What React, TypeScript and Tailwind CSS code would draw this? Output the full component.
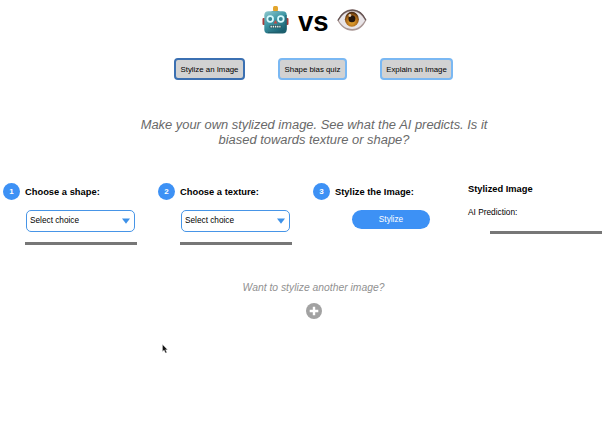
import React from "react";

function Robot() {
  return (
    <svg width="27" height="29" viewBox="0 0 27 29" aria-label="Robot">
      <defs>
        <linearGradient id="face" x1="0" y1="0" x2="0.6" y2="1">
          <stop offset="0" stopColor="#8fc9cf" />
          <stop offset="0.5" stopColor="#3f97a5" />
          <stop offset="1" stopColor="#195f70" />
        </linearGradient>
      </defs>
      <path d="M8 6.5 Q13.5 2.5 19 6.5Z" fill="#397e8c" />
      <rect x="11" y="0" width="5" height="5.3" rx="1.5" fill="#e3a52c" />
      <rect x="0.5" y="12" width="3" height="7" rx="1" fill="#a83b39" />
      <rect x="23.5" y="12" width="3" height="7" rx="1" fill="#a83b39" />
      <rect x="2.3" y="5.3" width="22.4" height="22.2" rx="4" fill="url(#face)" />
      <path d="M24 9v14q0 3.5-4 3.5H6" fill="none" stroke="#215f6c" strokeWidth="1" />
      <circle cx="8.2" cy="13" r="3.7" fill="#d8fbff" />
      <circle cx="18.8" cy="13" r="3.7" fill="#d8fbff" />
      <circle cx="8.2" cy="13" r="2" fill="#398796" />
      <circle cx="18.8" cy="13" r="2" fill="#398796" />
      <path d="m13.5 14 2 3.5h-4z" fill="#c14c45" />
      <rect x="7.5" y="19" width="12" height="3.3" rx="1" fill="#275761" />
      <path d="M8.5 20.6h10" stroke="#e5f3ed" strokeWidth="1.7" strokeDasharray="1.4 .8" />
    </svg>
  );
}

function Eye() {
  return (
    <svg width="30" height="24" viewBox="0 0 30 24" aria-label="Eye">
      <defs>
        <radialGradient id="iris" cx="0.5" cy="0.65" r="0.6">
          <stop offset="0.3" stopColor="#d7962b" />
          <stop offset="0.7" stopColor="#a86416" />
          <stop offset="1" stopColor="#4b2a10" />
        </radialGradient>
      </defs>
      <path d="M.5 12.5C4 5 9 1 15.500 1.300c7 .2 11 4.700 13.800 11-3 6.500-8 10.500-14 10.500C8.500 22.800 3.500 18 .5 12.500Z" fill="#a99694" />
      <path d="M1.800 12.600C6 5.500 10 3.500 15.500 3.500c6 0 9.500 3.500 12.500 8.800-4 6.200-7.500 8.700-12.700 8.700-6 0-10.500-3-13.500-8.400Z" fill="#e9e5e8" />
      <path d="M.8 12.500C4.500 5.500 9.500 2.200 15.500 2.200c6.500 0 10.500 4 13.500 10" fill="none" stroke="#625150" strokeWidth="1.2" />
      <ellipse cx="14.900" cy="11.300" rx="7" ry="7.500" fill="url(#iris)" />
      <circle cx="14.900" cy="10.800" r="3.500" fill="#24150d" />
      <circle cx="12.900" cy="7.500" r="1.400" fill="#e1cfb9" />
    </svg>
  );
}

function StepTitle({ number, children }: { number: number; children: React.ReactNode }) {
  return (
    <div className="flex h-[18px] items-center gap-[5px]">
      <span className="flex size-[17px] items-center justify-center rounded-full bg-[#3d91f5] pt-px text-[8px] font-bold text-white">{number}</span>
      <h2 className="pt-[2px] text-[9.35px] font-bold whitespace-nowrap">{children}</h2>
    </div>
  );
}

function Choice({ number, title }: { number: number; title: string }) {
  return (
    <section className="w-[155px]">
      <StepTitle number={number}>{title}</StepTitle>
      <button className="mt-[10px] ml-[23px] flex h-[22px] w-[109px] items-center justify-between rounded-[5px] border-[1.5px] border-[#4795e7] pr-1 pl-[3px] text-[8.25px]">
        <span className="pt-px">Select choice</span>
        <svg width="8" height="6" viewBox="0 0 8 6"><path d="M0 .5h8L4 5.700z" fill="#3d91e8" /></svg>
      </button>
      <div className="mt-[10px] ml-[22px] h-[3px] w-[112px] bg-[#777]" />
    </section>
  );
}

function NavButton({ children, active = false, width }: { children: React.ReactNode; active?: boolean; width: string }) {
  return (
    <button className={`h-[22px] rounded-[4px] border-2 bg-[#d2d2d2] pt-px text-[7.85px] whitespace-nowrap ${width} ${active ? "border-[#3b70b2]" : "border-[#7ab8f3]"}`}>
      {children}
    </button>
  );
}

export default function App() {
  return (
    <main className="relative h-[434px] w-[616px] overflow-hidden bg-white font-['Liberation_Sans',Arial,sans-serif] text-black">
      <header className="flex h-[40px] items-center pl-[262px]">
        <Robot />
        <h1 className="ml-[9px] w-[30px] pt-[3px] text-[27.5px] leading-[30px] font-bold">vs</h1>
        <div className="ml-[9px]"><Eye /></div>
      </header>
      <nav className="mt-[18px] ml-[174px] flex gap-[33px]">
        <NavButton active width="w-[71px]">Stylize an Image</NavButton>
        <NavButton width="w-[69px]">Shape bias quiz</NavButton>
        <NavButton width="w-[73px]">Explain an Image</NavButton>
      </nav>
      <p className="mt-[37px] ml-[134px] w-[360px] text-center text-[12.92px] leading-[15px] text-[#696969] italic">
        Make your own stylized image. See what the AI predicts. Is it<br />biased towards texture or shape?
      </p>
      <div className="mt-[35px] ml-[3px] flex h-[64px]">
        <Choice number={1} title="Choose a shape:" />
        <Choice number={2} title="Choose a texture:" />
        <section className="w-[155px]">
          <StepTitle number={3}>Stylize the Image:</StepTitle>
          <button className="mt-[10px] ml-[39px] h-[19px] w-[78px] rounded-full bg-[#3d91f5] pt-[2px] text-[8.25px] text-white">Stylize</button>
        </section>
        <section className="w-[134px]">
          <h2 className="mt-[1px] text-[9.3px] leading-[12px] font-bold">Stylized Image</h2>
          <p className="mt-[12px] text-[8.3px] leading-[10px]">AI Prediction:</p>
          <div className="mt-[14px] ml-[22px] h-[3px] w-[112px] bg-[#777]" />
        </section>
      </div>
      <footer className="mt-[36px] ml-[213px] flex w-[201px] flex-col items-center">
        <p className="text-[10.35px] leading-[12px] text-[#919191] italic">Want to stylize another image?</p>
        <button className="mt-[9px] flex size-[16px] items-center justify-center rounded-full bg-[#a2a2a2]" aria-label="Add image">
          <svg width="10" height="10" viewBox="0 0 10 10"><path d="M5 .7v8.600M.7 5h8.600" stroke="white" strokeWidth="2.4" /></svg>
        </button>
      </footer>
      <svg className="absolute top-[344px] left-[162px]" width="6" height="10" viewBox="0 0 6 10"><path d="M.5.5v7l1.600-1.400L3.500 9l1.300-.6-1.300-2.700h2z" fill="#111" stroke="#ddd" strokeWidth=".4" /></svg>
    </main>
  );
}
